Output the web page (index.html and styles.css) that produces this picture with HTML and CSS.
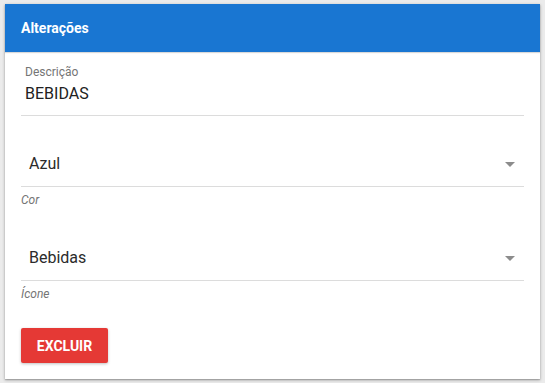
FILE: index.html
```html
<!DOCTYPE html>
<html lang="pt">
<head>
<meta charset="utf-8">
<title>Alterações</title>
<link rel="stylesheet" href="styles.css">
</head>
<body>
  <div class="card">
    <div class="card-header">Alterações</div>
    <div class="card-body">
      <div class="field input-field">
        <label class="field-label">Descrição</label>
        <div class="field-value">BEBIDAS</div>
      </div>
      <div class="field select-field first-select">
        <div class="select-row">
          <span class="select-value">Azul</span>
          <span class="arrow"></span>
        </div>
      </div>
      <div class="hint">Cor</div>
      <div class="field select-field">
        <div class="select-row">
          <span class="select-value">Bebidas</span>
          <span class="arrow"></span>
        </div>
      </div>
      <div class="hint">Ícone</div>
      <div class="actions">
        <button class="btn-danger">EXCLUIR</button>
      </div>
    </div>
  </div>
</body>
</html>
```

FILE: styles.css
```css
html, body {
  margin: 0;
  padding: 0;
}
body {
  background: #ebebeb;
  padding: 4px 5px;
  font-family: Roboto, "Liberation Sans", Arial, sans-serif;
  width: 545px;
  height: 383px;
  box-sizing: border-box;
}
.card {
  width: 535px;
  height: 375px;
  background: #fff;
  box-shadow: 0 1px 3px rgba(0,0,0,0.3), 0 1px 1px rgba(0,0,0,0.14);
  display: flex;
  flex-direction: column;
}
.card-header {
  height: 48px;
  line-height: 48px;
  background: #1976d2;
  color: #fff;
  font-weight: 700;
  font-size: 14px;
  padding-left: 16px;
  box-shadow: 0 1px 1px rgba(0,0,0,0.15);
}
.card-body {
  padding: 13px 16px 0 16px;
  display: flex;
  flex-direction: column;
}
.field {
  border-bottom: 1px solid #dcdcdc;
}
.input-field {
  padding: 0 4px 11px 4px;
}
.field-label {
  display: block;
  font-size: 12px;
  line-height: 14px;
  color: #757575;
}
.field-value {
  margin-top: 5px;
  font-size: 16px;
  line-height: 20px;
  color: #212121;
}
.select-field {
  margin-top: 40px;
  padding: 1px 9px 12px 8px;
}
.first-select {
  margin-top: 37px;
}
.select-row {
  display: flex;
  align-items: center;
  justify-content: space-between;
  height: 20px;
}
.select-value {
  font-size: 16px;
  line-height: 20px;
  color: #2b2b2b;
}
.arrow {
  width: 0;
  height: 0;
  border-left: 5px solid transparent;
  border-right: 5px solid transparent;
  border-top: 5px solid #8c8c8c;
  margin-top: 1px;
}
.hint {
  margin-top: 6px;
  font-size: 12px;
  line-height: 14px;
  font-style: italic;
  color: #757575;
}
.actions {
  margin-top: 27px;
  display: flex;
}
.btn-danger {
  height: 35px;
  width: 87px;
  border: none;
  border-radius: 2px;
  background: #e53935;
  color: #fff;
  font-family: Roboto, "Liberation Sans", Arial, sans-serif;
  font-weight: 700;
  font-size: 14px;
  padding: 0;
  box-shadow: 0 1px 3px rgba(0,0,0,0.25);
  cursor: pointer;
}
```
